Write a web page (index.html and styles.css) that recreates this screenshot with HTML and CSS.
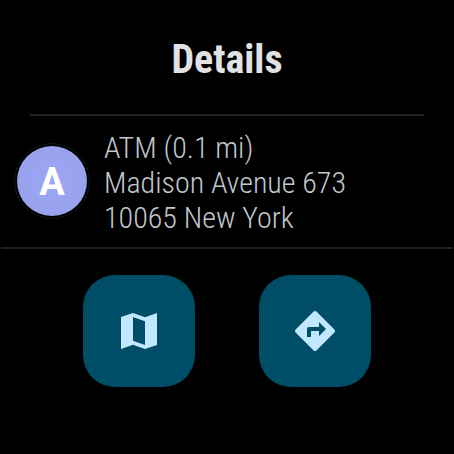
FILE: index.html
```
<!DOCTYPE html>
<html lang="en">
<head>
  <meta charset="UTF-8">
  <meta name="viewport" content="width=device-width, initial-scale=1.0">
  <title>Details</title>
  <link rel="stylesheet" href="styles.css">
</head>
<body>

  <header>
    <h1>Details</h1>
  </header>

  <main>
    <section class="place">
      <div class="avatar"><span>A</span></div>
      <address>
        ATM (0.1 mi)<br>
        Madison Avenue 673<br>
        10065 New York
      </address>
    </section>

    <div class="actions">
      <button type="button" aria-label="Map">
        <svg viewBox="0 0 24 24" aria-hidden="true">
          <path fill-rule="evenodd" d="M21 3l-6 2.1L9 3 3 5v16l6-2.1 6 2.1 6-2zM15 19l-6-2.11V5l6 2.11z"/>
        </svg>
      </button>
      <button type="button" aria-label="Directions">
        <svg viewBox="0 0 24 24" aria-hidden="true">
          <path d="M21.71 11.29l-9-9c-.39-.39-1.02-.39-1.41 0l-9 9c-.39.39-.39 1.02 0 1.41l9 9c.39.39 1.02.39 1.41 0l9-9c.39-.38.39-1.01 0-1.41zM14 14.5V12h-4v3H8v-4c0-.55.45-1 1-1h5V7.5l3.5 3.5-3.5 3.5z"/>
        </svg>
      </button>
    </div>
  </main>

</body>
</html>
```
FILE: styles.css
```
body {
  background: #000;
  color: #c1c7ce;
  font-family: "Roboto Condensed", Roboto, sans-serif;
  margin: 0;
}
header {
  margin: 0 30px;
  padding: 37px 0 31px;
  border-bottom: 2px solid #222;
  text-align: center;
}
h1 {
  margin: 0;
  color: #e2e2e5;
  font-size: 40px;
  line-height: 46px;
  font-weight: 700;
}
.place {
  display: flex;
  align-items: center;
  gap: 14px;
  margin: 0 1px;
  padding: 10px 13px 12px;
  border-bottom: 2px solid #222;
}
.avatar {
  box-sizing: border-box;
  flex: none;
  width: 76px;
  height: 76px;
  padding: 2px;
  border: 1px solid #15161f;
  border-radius: 50%;
}
.avatar span {
  display: block;
  width: 70px;
  height: 70px;
  border-radius: 50%;
  background: radial-gradient(circle, #9ba6f5, #98a0e8);
  color: #fff;
  font-family: Roboto, sans-serif;
  font-size: 38px;
  line-height: 72px;
  font-weight: 700;
  text-align: center;
}
address {
  padding-top: 4px;
  font-size: 30px;
  line-height: 35px;
  font-weight: 300;
  font-style: normal;
}
.actions {
  display: flex;
  justify-content: center;
  gap: 64px;
  padding: 26px 0;
}
button {
  display: flex;
  align-items: center;
  justify-content: center;
  width: 112px;
  height: 112px;
  padding: 0;
  border: none;
  border-radius: 32px;
  background: #004d67;
  cursor: pointer;
}
button svg {
  width: 48px;
  height: 48px;
  fill: #c2e8ff;
}
```
